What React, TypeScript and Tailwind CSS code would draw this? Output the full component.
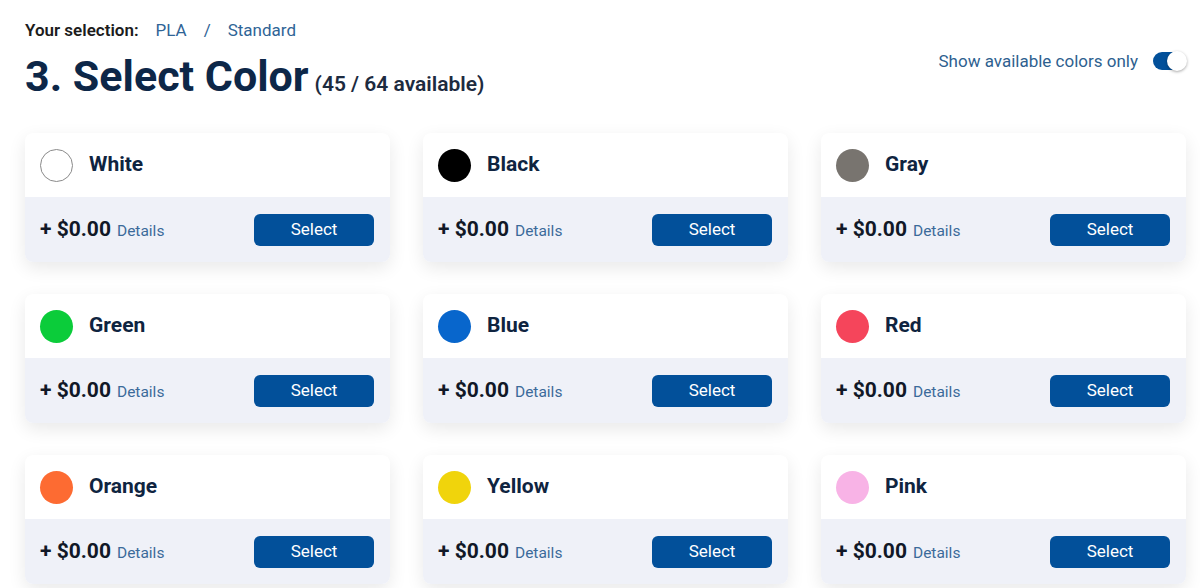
import React from 'react';

interface ColorOption {
  name: string;
  hex: string;
  outline?: boolean;
}

const colors: ColorOption[] = [
  { name: 'White', hex: '#ffffff', outline: true },
  { name: 'Black', hex: '#000000' },
  { name: 'Gray', hex: '#78746f' },
  { name: 'Green', hex: '#0bcc3a' },
  { name: 'Blue', hex: '#0866cc' },
  { name: 'Red', hex: '#f5455b' },
  { name: 'Orange', hex: '#fd6b32' },
  { name: 'Yellow', hex: '#f0d40c' },
  { name: 'Pink', hex: '#f8b3e6' },
];

const ColorCard: React.FC<{ color: ColorOption }> = ({ color }) => (
  <div className="rounded-lg bg-white shadow-[0_6px_18px_rgba(0,0,0,0.09)] overflow-hidden">
    {/* name row */}
    <div className="h-[64px] flex items-center gap-4 px-[15px]">
      <span
        className={`w-[33px] h-[33px] rounded-full flex-shrink-0 ${color.outline ? 'border border-[#8a8a8a]' : ''}`}
        style={{ backgroundColor: color.hex }}
      />
      <span className="text-[21px] font-bold text-[#0f2440]">{color.name}</span>
    </div>

    {/* price row */}
    <div className="h-[65px] bg-[#eff1f8] flex items-center justify-between pl-[15px] pr-[16px]">
      <div className="flex items-baseline gap-[6px]">
        <span className="text-[21px] font-bold text-[#111827]">+ $0.00</span>
        <span className="text-[15.5px] text-[#3b6a9a]">Details</span>
      </div>
      <button className="w-[120px] h-[32px] rounded-md bg-[#02509a] text-white text-[17px] font-normal">
        Select
      </button>
    </div>
  </div>
);

export default function App() {
  return (
    <div className="min-h-screen bg-white pl-[25px] pr-[14px] pt-[19px] font-['Roboto',_'Liberation_Sans',_sans-serif]">
      <div className="flex justify-between items-start">
        <div>
          <div className="h-6 flex items-center text-[17px]">
            <span className="font-semibold text-[#1c1c1c]">Your selection:</span>
            <span className="ml-[17px] text-[#2f6496]">PLA</span>
            <span className="ml-[17px] text-[#2f6496]">/</span>
            <span className="ml-[17px] text-[#2f6496]">Standard</span>
          </div>
          <div className="mt-[7px] flex items-baseline gap-[6px]">
            <h1 className="text-[43px] leading-[52px] font-bold text-[#0d2748]">3. Select Color</h1>
            <span className="text-[21px] font-semibold text-[#1d2b3f]">(45 / 64 available)</span>
          </div>
        </div>

        <div className="mt-[30px] flex items-center gap-[15px]">
          <span className="text-[17px] leading-6 text-[#2e5f8f]">Show available colors only</span>
          <div className="relative w-[33px] h-[18px] rounded-full bg-[#02509a]">
            <span className="absolute -right-[1px] -top-[1px] w-5 h-5 rounded-full bg-white shadow-[0_1px_3px_rgba(0,0,0,0.35)]" />
          </div>
        </div>
      </div>

      <div className="mt-[31px] grid grid-cols-3 gap-x-[33px] gap-y-[32px]">
        {colors.map((c) => (
          <ColorCard key={c.name} color={c} />
        ))}
      </div>
    </div>
  );
}
